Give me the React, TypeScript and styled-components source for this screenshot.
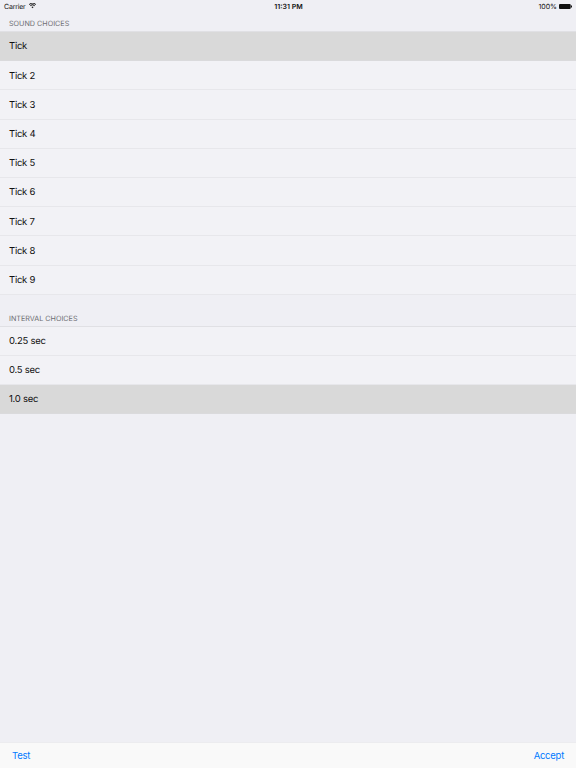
import React from "react";
import styled, { createGlobalStyle } from "styled-components";

const GlobalStyle = createGlobalStyle`
  html, body {
    margin: 0;
    padding: 0;
    background-color: #efeff4;
    font-family: "Inter", "Liberation Sans", sans-serif;
    text-rendering: geometricPrecision;
    -webkit-font-smoothing: antialiased;
  }
`;

const Screen = styled.div`
  width: 576px;
  height: 768px;
  display: flex;
  flex-direction: column;
  overflow: hidden;
  background-color: #efeff4;
`;

const StatusBar = styled.div`
  height: 12px;
  padding: 0 4px;
  display: grid;
  grid-template-columns: 1fr auto 1fr;
  align-items: center;
  font-size: 7px;
  color: #111;
`;

const StatusLeft = styled.div`
  display: flex;
  align-items: center;
  gap: 3.5px;
  letter-spacing: -0.2px;
`;

const StatusTime = styled.div`
  font-weight: 600;
  padding-left: 1px;
`;

const StatusRight = styled.div`
  display: flex;
  align-items: center;
  justify-content: flex-end;
  gap: 2px;
`;

const Content = styled.div`
  flex: 1;
`;

const SectionHeader = styled.div<{ $height: number }>`
  height: ${({ $height }) => $height}px;
  padding: 0 9px 3px;
  box-sizing: border-box;
  display: flex;
  align-items: flex-end;
  font-size: 7.2px;
  color: #6d6d72;
`;

const Section = styled.div`
  border-top: 1px solid #e0e0e4;
`;

const Row = styled.div<{ $selected?: boolean }>`
  height: 29.2px;
  box-sizing: border-box;
  display: flex;
  align-items: center;
  padding: 0.6px 0 0 9px;
  font-size: 9.5px;
  letter-spacing: -0.25px;
  color: #111;
  background-color: ${({ $selected }) => ($selected ? "#d9d9d9" : "#f2f2f6")};
  box-shadow: inset 0 -0.5px 0 #dcdce0;
`;

const Toolbar = styled.div`
  height: 25px;
  padding: 0 12px;
  display: flex;
  align-items: center;
  justify-content: space-between;
  background-color: #f9f9f9;
  border-top: 0.5px solid #ececef;
`;

const ToolbarButton = styled.button`
  border: 0;
  padding: 0;
  background: none;
  font: inherit;
  font-size: 9.5px;
  letter-spacing: -0.25px;
  color: #007aff;
`;

const WifiIcon = () => (
  <svg width="7" height="5.25" viewBox="0 0 16 12" fill="#111">
    <path d="M8 12 L5.6 9.2 A3.6 3.6 0 0 1 10.4 9.2 Z" />
    <path d="M3.9 7.3 L2.5 5.7 A8 8 0 0 1 13.5 5.7 L12.1 7.3 A6 6 0 0 0 3.9 7.3 Z" />
    <path d="M1.3 4.3 L0 2.8 A12 12 0 0 1 16 2.8 L14.7 4.3 A10 10 0 0 0 1.3 4.3 Z" />
  </svg>
);

const BatteryIcon = () => (
  <svg width="13" height="5" viewBox="0 0 13 5" fill="#111">
    <rect x="0" y="0" width="11.7" height="5" rx="1" />
    <rect x="12" y="1.5" width="1" height="2" />
  </svg>
);

const soundChoices = ["Tick", "Tick 2", "Tick 3", "Tick 4", "Tick 5", "Tick 6", "Tick 7", "Tick 8", "Tick 9"];
const intervalChoices = ["0.25 sec", "0.5 sec", "1.0 sec"];

const App: React.FC = () => {
  const selectedSound = "Tick";
  const selectedInterval = "1.0 sec";

  return (
    <Screen>
      <GlobalStyle />
      <StatusBar>
        <StatusLeft>
          Carrier
          <WifiIcon />
        </StatusLeft>
        <StatusTime>11:31 PM</StatusTime>
        <StatusRight>
          100%
          <BatteryIcon />
        </StatusRight>
      </StatusBar>
      <Content>
        <SectionHeader $height={19}>SOUND CHOICES</SectionHeader>
        <Section>
          {soundChoices.map((name) => (
            <Row key={name} $selected={name === selectedSound}>
              {name}
            </Row>
          ))}
        </Section>
        <SectionHeader $height={31}>INTERVAL CHOICES</SectionHeader>
        <Section>
          {intervalChoices.map((name) => (
            <Row key={name} $selected={name === selectedInterval}>
              {name}
            </Row>
          ))}
        </Section>
      </Content>
      <Toolbar>
        <ToolbarButton>Test</ToolbarButton>
        <ToolbarButton>Accept</ToolbarButton>
      </Toolbar>
    </Screen>
  );
};

export default App;
